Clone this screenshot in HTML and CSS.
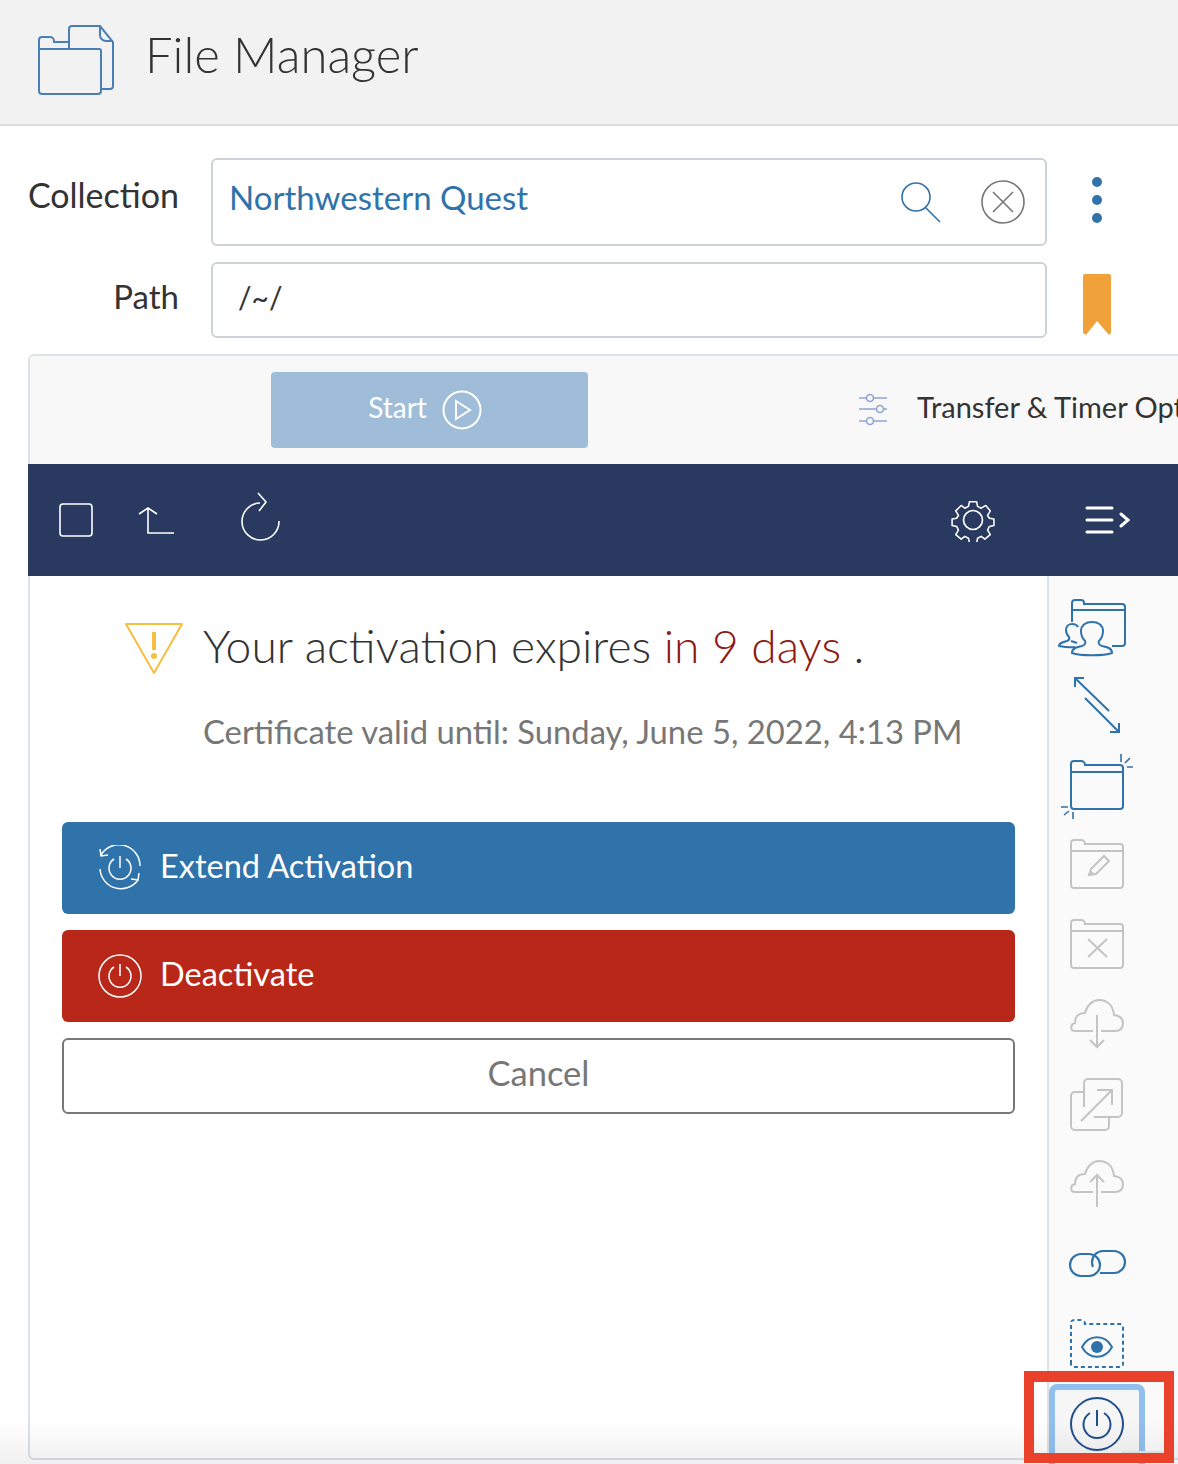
FILE: index.html
```html
<!DOCTYPE html>
<html lang="en">
<head>
  <meta charset="UTF-8">
  <title>File Manager</title>
  <link rel="stylesheet" href="styles.css">
</head>
<body>
  <!-- Header -->
  <header class="app-header">
    <svg class="app-icon" width="78" height="70" viewBox="0 0 78 70" fill="none" stroke="#4a7fb5" stroke-width="2">
      <path d="M2 66V15a3 3 0 0 1 3-3h8a4 4 0 0 1 4 4v1h15M2 24h60a2 2 0 0 1 2 2v40a3 3 0 0 1-3 3H5a3 3 0 0 1-3-3z"/>
      <path d="M32 24V4a3 3 0 0 1 3-3h28l13 16v44a3 3 0 0 1-3 3h-9"/>
      <path d="M63 1v9a6 6 0 0 0 6 6h7"/>
    </svg>
    <h1>File Manager</h1>
  </header>

  <!-- Collection and path -->
  <div class="form-row form-row-collection">
    <label>Collection</label>
    <div class="field field-collection">
      <span class="collection-name">Northwestern Quest</span>
      <svg width="42" height="42" viewBox="0 0 42 42" fill="none" stroke="#3072aa" stroke-width="1.6">
        <circle cx="16" cy="16" r="14"/>
        <path d="M25.500 26.500 40 41"/>
      </svg>
      <svg class="clear-icon" width="44" height="44" viewBox="0 0 44 44" fill="none" stroke="#777" stroke-width="1.6">
        <circle cx="22" cy="22" r="21"/>
        <path d="M12 12l20 20M32 12 12 32"/>
      </svg>
    </div>
    <div class="row-action">
      <span class="dots"><i></i><i></i><i></i></span>
    </div>
  </div>
  <div class="form-row form-row-path">
    <label>Path</label>
    <div class="field field-path">/~/</div>
    <div class="row-action">
      <svg class="bookmark" width="28" height="62" viewBox="0 0 28 62">
        <path d="M2 0h24a2 2 0 0 1 2 2v57l-2 2-12-14-11 14-3-2V2a2 2 0 0 1 2-2z" fill="#f0a13a"/>
      </svg>
    </div>
  </div>

  <div class="panel">
    <div class="transfer-bar">
      <button class="start-btn">
        <span>Start</span>
        <svg width="40" height="40" viewBox="0 0 40 40" fill="none" stroke="#fff" stroke-width="2">
          <circle cx="20" cy="20" r="18.500"/>
          <path d="M14 11l14 9-14 9z"/>
        </svg>
      </button>
      <svg class="sliders" width="30" height="34" viewBox="0 0 30 34" fill="none" stroke="#8fa3d6" stroke-width="1.600">
        <path d="M1 5h7M16 5h13M1 16h17M26 16h3M1 28h7M16 28h13"/>
        <circle cx="12" cy="5" r="3.500"/>
        <circle cx="22" cy="16" r="3.500"/>
        <circle cx="12" cy="28" r="3.500"/>
      </svg>
      <span class="transfer-label">Transfer &amp; Timer Options</span>
    </div>

    <div class="navy-bar">
      <svg width="36" height="36" viewBox="0 0 36 36" fill="none" stroke="#fff" stroke-width="1.600">
        <rect x="2" y="2" width="32" height="32" rx="3"/>
      </svg>
      <svg class="up-icon" width="38" height="30" viewBox="0 0 38 30" fill="none" stroke="#fff" stroke-width="1.600">
        <path d="M1 9l9-6 9 6M10 3v25h26"/>
      </svg>
      <svg class="refresh-icon" width="42" height="50" viewBox="0 0 42 50" fill="none" stroke="#fff" stroke-width="1.600">
        <path d="M21 11A18.500 18.500 0 1 0 40 29"/>
        <path d="M19 1l8 9-7 9"/>
      </svg>
      <svg class="gear-icon" width="44" height="44" viewBox="0 0 44 44" fill="none" stroke="#fff" stroke-width="1.700">
        <circle cx="22" cy="22" r="9.500"/>
        <path d="M18 2h8l1 5 4 2 5-3 5 6-3 5 2 3 5 1v7l-5 1-2 4 3 5-6 5-4-3-4 2-1 5h-8l-1-5-4-2-4 3-6-5 3-5-2-4-5-1v-7l5-1 2-3-3-5 6-6 4 3 4-2z" stroke-linejoin="round" transform="translate(2 2) scale(.91)"/>
      </svg>
      <svg class="menu-icon" width="46" height="30" viewBox="0 0 46 30" fill="none" stroke="#fff" stroke-width="3" stroke-linecap="round">
        <path d="M2 3h25M2 15h25M2 27h25M36 9l7 6-7 6"/>
      </svg>
    </div>

    <div class="panel-body">
      <div class="content">
        <div class="notice">
          <svg width="60" height="54" viewBox="0 0 60 54" fill="none">
            <path d="M2 2h56L30 51z" stroke="#f5bf42" stroke-width="2" stroke-linejoin="round"/>
            <path d="M30 10v18" stroke="#f5bf42" stroke-width="4"/>
            <circle cx="30" cy="34" r="3" fill="#f5bf42"/>
          </svg>
          <div>
            <p class="notice-title">Your activation expires <span class="days">in 9 days</span> .</p>
            <p class="notice-sub">Certificate valid until: Sunday, June 5, 2022, 4:13 PM</p>
          </div>
        </div>

        <button class="action-btn btn-extend">
          <svg width="46" height="46" viewBox="0 0 46 46" fill="none" stroke="#fff" stroke-width="1.500">
            <path d="M17 14a11 11 0 1 0 12 0M23 11v12"/>
            <path d="M4 10a21 21 0 0 1 39 11M3 24a21 21 0 0 0 38 11"/>
            <path d="M3 4l1 7 7-1M34 34l7 1 1-7"/>
          </svg>
          <span>Extend Activation</span>
        </button>
        <button class="action-btn btn-deactivate">
          <svg width="46" height="46" viewBox="0 0 46 46" fill="none" stroke="#fff" stroke-width="1.500">
            <circle cx="23" cy="23" r="21"/>
            <path d="M17 14a11 11 0 1 0 12 0M23 11v12"/>
          </svg>
          <span>Deactivate</span>
        </button>
        <button class="cancel-btn">Cancel</button>
      </div>

      <!-- Side actions -->
      <div class="side-actions">
        <div class="side-item on">
          <svg width="80" height="80" viewBox="0 0 80 80" fill="none" stroke-width="2">
            <path d="M15 35V16a3 3 0 0 1 3-3h6a3 3 0 0 1 3 3v1h38a3 3 0 0 1 3 3v36a3 3 0 0 1-3 3H55M15 23h53"/>
            <path fill="#fafafa" d="M15 66c0-5 5-6 10-7 3-1 4-3 3-5-3-3-4-6-4-10 0-6 5-9 11-9s11 3 11 9c0 4-1 7-4 10-1 2 0 4 3 5 5 1 10 2 10 7-8 3-32 3-40 0z"/>
            <path d="M18 60c-6 1-11 0-16-1 0-3 4-4 8-5 2-1 3-2 2-4-2-2-3-4-3-7 0-4 3-6 6-6s5 1 6 3M14 54l6 2"/>
          </svg>
        </div>
        <div class="side-item on">
          <svg width="80" height="80" viewBox="0 1 80 80" fill="none" stroke-width="2">
            <path d="M18 12l34 33M28 32l34 34M18 21v-9h9M62 57v9h-9"/>
          </svg>
        </div>
        <div class="side-item on">
          <svg width="80" height="80" viewBox="0 0 80 80" fill="none" stroke-width="2">
            <path d="M14 60V18a3 3 0 0 1 3-3h7a4 4 0 0 1 4 4h35a3 3 0 0 1 3 3v38a3 3 0 0 1-3 3H17a3 3 0 0 1-3-3zM14 26h52"/>
            <path d="M64 8v8M68 17l5-5M70 21h6M4 61h7M7 69l5-4M16 66v7" stroke-width="1.600"/>
          </svg>
        </div>
        <div class="side-item off">
          <svg width="80" height="80" viewBox="0 1 80 80" fill="none" stroke-width="2">
            <path d="M14 60V18a3 3 0 0 1 3-3h7a4 4 0 0 1 4 4h35a3 3 0 0 1 3 3v38a3 3 0 0 1-3 3H17a3 3 0 0 1-3-3zM14 26h52"/>
            <path d="M34 44l13-13 5 5-13 13-7 1zM33 46l4 4"/>
          </svg>
        </div>
        <div class="side-item off">
          <svg width="80" height="80" viewBox="0 1 80 80" fill="none" stroke-width="2">
            <path d="M14 60V18a3 3 0 0 1 3-3h7a4 4 0 0 1 4 4h35a3 3 0 0 1 3 3v38a3 3 0 0 1-3 3H17a3 3 0 0 1-3-3zM14 26h52"/>
            <path d="M31 34l19 18M50 34 31 52"/>
          </svg>
        </div>
        <div class="side-item off">
          <svg width="80" height="80" viewBox="0 2 80 80" fill="none" stroke-width="2">
            <path d="M36 48H18c-5 0-5-7 0-8 0-7 4-10 10-10 2-8 8-13 14-13 9 0 14 6 15 15 7 1 9 4 9 8 0 5-3 8-8 8H44"/>
            <path d="M40 32v32M33 57l7 7 7-7"/>
          </svg>
        </div>
        <div class="side-item off">
          <svg width="80" height="80" viewBox="0 0 80 80" fill="none" stroke-width="2">
            <path d="M27 27h-9a4 4 0 0 0-4 4v30a4 4 0 0 0 4 4h30a4 4 0 0 0 4-4v-9"/>
            <path d="M27 42V18a4 4 0 0 1 4-4h30a4 4 0 0 1 4 4v30a4 4 0 0 1-4 4H37"/>
            <path d="M24 56l31-31M40 25h15v15"/>
          </svg>
        </div>
        <div class="side-item off">
          <svg width="80" height="80" viewBox="0 0 80 80" fill="none" stroke-width="2">
            <path d="M36 47H18c-5 0-5-7 0-8 0-7 4-10 10-10 2-8 8-13 14-13 9 0 14 6 15 15 7 1 9 4 9 8 0 5-3 8-8 8H44"/>
            <path d="M40 62V30M33 37l7-7 7 7"/>
          </svg>
        </div>
        <div class="side-item on">
          <svg width="80" height="80" viewBox="0 0 80 80" fill="none" stroke-width="2.200">
            <rect x="13" y="30" width="30" height="22" rx="11"/>
            <path d="M36 43c-1-2-1-3-1-5a11 11 0 0 1 11-11h11a11 11 0 0 1 0 22H43"/>
          </svg>
        </div>
        <div class="side-item on">
          <svg width="80" height="80" viewBox="0 0 80 80" fill="none" stroke-width="2">
            <path stroke-dasharray="4 3" d="M14 60V19a3 3 0 0 1 3-3h7a4 4 0 0 1 4 4h35a3 3 0 0 1 3 3v37a3 3 0 0 1-3 3H17a3 3 0 0 1-3-3z"/>
            <path d="M25 43c7-13 23-13 30 0-7 13-23 13-30 0z"/>
            <circle cx="40" cy="43" r="6" fill="#3072aa" stroke="none"/>
          </svg>
        </div>
        <div class="side-item active">
          <svg width="80" height="80" viewBox="0 0 80 80" fill="none" stroke="#1f4e8f" stroke-width="2">
            <circle cx="40" cy="40" r="26"/>
            <path d="M33 29a13.500 13.500 0 1 0 14 0M40 26v16"/>
          </svg>
        </div>
      </div>
    </div>
  </div>

  <!-- Things drawn over the screenshot -->
  <div class="bottom-fade"></div>
  <div class="callout"></div>
</body>
</html>
```

FILE: styles.css
```css
html, body {
  margin: 0;
  height: 1464px;
  overflow: hidden;
}

body {
  position: relative;
  font-family: Lato, "Open Sans", sans-serif;
  background-color: white;
  color: #333;
}

p {
  margin: 0;
}

button {
  font-family: inherit;
  cursor: pointer;
}

.app-header {
  height: 124px;
  display: flex;
  align-items: center;
  background-color: #f2f2f2;
  border-bottom: 2px solid #dcdcdc;
  padding-left: 37px;
}

.app-icon {
  margin-right: 30px;
  margin-top: -4px;
}

.app-header h1 {
  margin: -16px 0 0;
  font-size: 49px;
  font-weight: 300;
  color: #333;
}

.form-row {
  display: flex;
  align-items: center;
}

.form-row-collection {
  height: 88px;
  margin-top: 32px;
}

.form-row-path {
  height: 76px;
  margin-top: 16px;
}

.form-row label {
  width: 179px;
  text-align: right;
  font-size: 34px;
  margin-right: 32px;
  font-weight: 400;
}

.form-row-collection label {
  margin-top: -16px;
}

.form-row-path label {
  margin-top: -8px;
  font-size: 33px;
}

.field {
  width: 836px;
  height: 100%;
  box-sizing: border-box;
  border: 2px solid #ced3d8;
  border-radius: 6px;
  display: flex;
  align-items: center;
}

.field-collection {
  padding-left: 16px;
}

.collection-name {
  flex: 1;
  color: #3072aa;
  font-size: 33px;
  margin-top: -10px;
}

.clear-icon {
  margin: 0 20px 0 39px;
}

.field-path {
  padding: 0 0 6px 25px;
  font-size: 30px;
}

.row-action {
  flex: 1;
  display: flex;
  justify-content: center;
  width: 100px;
  max-width: 100px;
}

.dots {
  display: flex;
  flex-direction: column;
  gap: 8px;
  margin-top: -4px;
}

.dots i {
  width: 10px;
  height: 10px;
  border-radius: 50%;
  background-color: #3072aa;
}

.bookmark {
  margin-top: 10px;
}

.panel {
  margin: 16px 0 0 28px;
  width: 1170px;
  height: 1106px;
  box-sizing: border-box;
  border: 2px solid #dde2e6;
  border-radius: 6px 0 0 6px;
  display: flex;
  flex-direction: column;
}

.transfer-bar {
  height: 108px;
  flex: none;
  background-color: #f8f8f8;
  border-top-left-radius: 4px;
  display: flex;
  align-items: center;
  padding-left: 241px;
  white-space: nowrap;
  overflow: hidden;
}

.start-btn {
  width: 317px;
  height: 76px;
  flex: none;
  border: none;
  border-radius: 4px;
  background-color: #9fbdd8;
  color: white;
  font-size: 28px;
  display: flex;
  align-items: center;
  justify-content: center;
  gap: 15px;
  padding: 0 9px 0 0;
  margin-right: 270px;
}

.start-btn span {
  margin-top: -6px;
}

.sliders {
  flex: none;
  margin-right: 29px;
}

.transfer-label {
  font-size: 29px;
  color: #333;
  margin-top: -8px;
}

.navy-bar {
  height: 112px;
  flex: none;
  margin-left: -2px;
  background-color: #2a3960;
  display: flex;
  align-items: center;
  padding-left: 30px;
}

.up-icon {
  margin-left: 44px;
}

.refresh-icon {
  margin-left: 63px;
  margin-top: -6px;
}

.gear-icon {
  margin-left: 670px;
}

.menu-icon {
  margin-left: 90px;
}

.panel-body {
  flex: 1;
  display: flex;
  min-height: 0;
}

.content {
  width: 1017px;
  flex: none;
  box-sizing: border-box;
  padding: 0 32px;
}

.notice {
  display: flex;
  gap: 19px;
  margin: 46px 0 70px 62px;
}

.notice-title {
  font-size: 46.200px;
  font-weight: 300;
  line-height: 52px;
  margin-top: -3px;
}

.days {
  color: #8e1a12;
}

.notice-sub {
  font-size: 32.800px;
  color: #777;
  margin-top: 41px;
  line-height: 40px;
}

.action-btn {
  width: 953px;
  height: 92px;
  display: flex;
  align-items: center;
  gap: 17px;
  padding: 0 0 0 35px;
  border: none;
  border-radius: 6px;
  color: white;
  font-size: 32.500px;
  margin-bottom: 16px;
}

.action-btn span {
  margin-top: -6px;
}

.btn-extend {
  background-color: #3072aa;
}

.btn-deactivate {
  background-color: #b92718;
}

.cancel-btn {
  width: 953px;
  height: 76px;
  background-color: white;
  border: 2px solid #777;
  border-radius: 6px;
  color: #777;
  font-size: 34.500px;
  padding: 0 0 8px;
}

.side-actions {
  flex: 1;
  box-sizing: border-box;
  border-left: 2px solid #dde2e6;
  background-color: #fafafa;
  padding-top: 11px;
}

.side-item {
  width: 96px;
  height: 79.7px;
  display: flex;
  align-items: center;
  justify-content: center;
  box-sizing: border-box;
}

.on svg {
  stroke: #3072aa;
}

.off svg {
  stroke: #c4c4c4;
}

.active {
  height: 90px;
  border: 6px solid #91bfee;
  border-radius: 8px 8px 0 0;
  background-color: #f6f6f6;
  align-items: flex-start;
}

.active svg {
  margin-top: -6px;
}

.bottom-fade {
  position: absolute;
  left: 0;
  right: 0;
  bottom: 0;
  height: 44px;
  background-image: linear-gradient(to bottom, rgba(0,0,0,0), rgba(0,0,0,0.06));
  pointer-events: none;
}

.callout {
  position: absolute;
  left: 1024px;
  top: 1371px;
  width: 150px;
  height: 92px;
  box-sizing: border-box;
  border: solid #e9412a;
  border-width: 11px 10px 10px 10px;
  pointer-events: none;
}

.callout::after {
  content: "";
  position: absolute;
  right: 0;
  bottom: 0;
  width: 42px;
  height: 2px;
  background-color: #ddd;
}
```
